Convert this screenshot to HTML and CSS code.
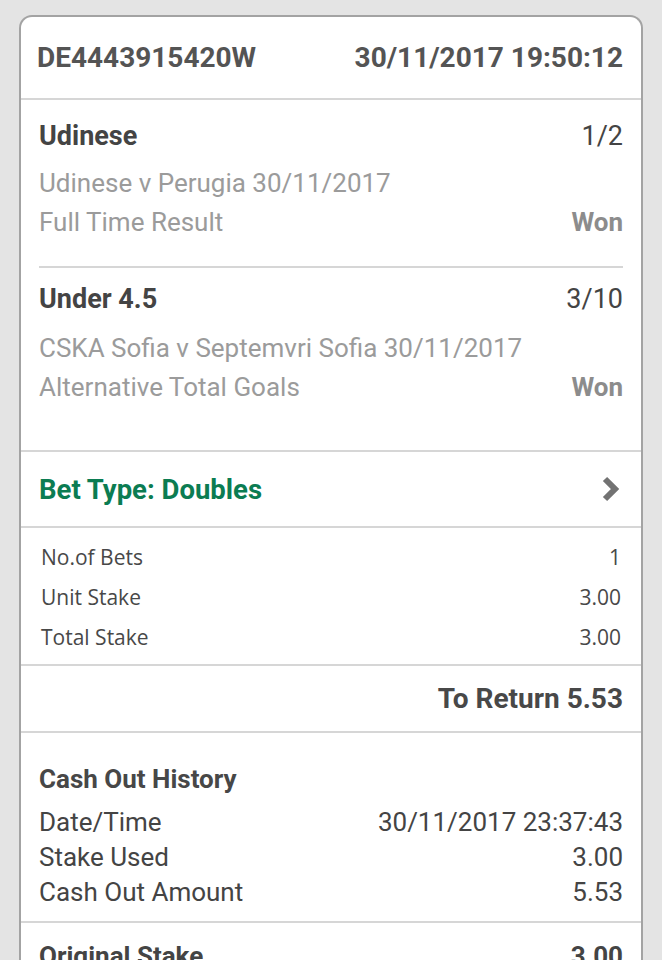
FILE: index.html
```html
<!DOCTYPE html>
<html lang="en">
<head>
    <meta charset="UTF-8">
    <meta name="viewport" content="width=device-width, initial-scale=1.0">
    <title>Bet Receipt</title>
    <link rel="stylesheet" href="styles.css">
</head>
<body>
    <div class="card">
        <header class="bet-header">
            <span>DE4443915420W</span>
            <span>30/11/2017 19:50:12</span>
        </header>

        <section class="selections">
            <div class="selection">
                <div class="sel-top">
                    <span class="sel-name">Udinese</span>
                    <span class="sel-odds">1/2</span>
                </div>
                <div class="sel-line">Udinese v Perugia 30/11/2017</div>
                <div class="sel-line">
                    <span>Full Time Result</span>
                    <span class="result">Won</span>
                </div>
            </div>
            <div class="selection">
                <div class="sel-top">
                    <span class="sel-name">Under 4.5</span>
                    <span class="sel-odds">3/10</span>
                </div>
                <div class="sel-line">CSKA Sofia v Septemvri Sofia 30/11/2017</div>
                <div class="sel-line">
                    <span>Alternative Total Goals</span>
                    <span class="result">Won</span>
                </div>
            </div>
        </section>

        <section class="bet-type">
            <span>Bet Type: Doubles</span>
            <svg class="chevron" width="20" height="26" viewBox="0 0 20 26">
                <path d="M4 3 L14 13 L4 23" fill="none" stroke="#727272" stroke-width="6"/>
            </svg>
        </section>

        <section class="stakes">
            <div class="stake-row"><span>No.of Bets</span><span>1</span></div>
            <div class="stake-row"><span>Unit Stake</span><span>3.00</span></div>
            <div class="stake-row"><span>Total Stake</span><span>3.00</span></div>
        </section>

        <section class="to-return">To Return 5.53</section>

        <section class="cashout">
            <h2>Cash Out History</h2>
            <div class="cash-row"><span>Date/Time</span><span>30/11/2017 23:37:43</span></div>
            <div class="cash-row"><span>Stake Used</span><span>3.00</span></div>
            <div class="cash-row"><span>Cash Out Amount</span><span>5.53</span></div>
        </section>

        <section class="original">
            <span>Original Stake</span>
            <span>3.00</span>
        </section>
    </div>
</body>
</html>
```

FILE: styles.css
```css
body {
    margin: 0;
    background: #e4e4e4;
    font-family: Roboto, "Noto Sans", sans-serif;
    color: #474747;
    overflow: hidden;
}
.card {
    margin: 15px 19px 0 19px;
    background: #fff;
    border: 2px solid #a3a3a3;
    border-bottom: none;
    border-radius: 13px 13px 0 0;
    height: 1000px;
}
.bet-header {
    display: flex;
    justify-content: space-between;
    align-items: center;
    height: 81px;
    padding: 0 18px 0 16px;
    font-size: 28px;
    font-weight: 700;
    color: #545454;
    border-bottom: 2px solid #d6d6d6;
}
.selections {
    padding: 6px 0 19px;
    border-bottom: 2px solid #d6d6d6;
}
.selection {
    margin: 0 18px;
    padding: 12px 0 24px;
    border-bottom: 2px solid #d6d6d6;
}
.selection:last-child {
    padding-top: 13px;
    border-bottom: none;
}
.sel-top {
    display: flex;
    justify-content: space-between;
    align-items: baseline;
    line-height: 36px;
}
.sel-name {
    font-size: 27px;
    font-weight: 700;
    color: #444;
}
.sel-odds {
    font-size: 27px;
    color: #444;
}
.sel-top + .sel-line {
    margin-top: 10px;
}
.selection:last-child .sel-top + .sel-line {
    margin-top: 12px;
}
.sel-line {
    display: flex;
    justify-content: space-between;
    align-items: baseline;
    line-height: 39px;
    font-size: 26px;
    color: #9b9b9b;
}
.result {
    font-weight: 700;
    color: #8c8c8c;
}
.bet-type {
    display: flex;
    justify-content: space-between;
    align-items: center;
    height: 74px;
    padding: 0 20px 0 18px;
    font-size: 27.5px;
    font-weight: 700;
    color: #0b7c52;
    border-bottom: 2px solid #d6d6d6;
}
.stakes {
    padding: 9px 0 7px;
    border-bottom: 2px solid #d6d6d6;
}
.stake-row {
    display: flex;
    justify-content: space-between;
    height: 40px;
    align-items: center;
    padding: 0 20px;
    font-family: "Open Sans", "Noto Sans", sans-serif;
    font-size: 21px;
    color: #484848;
}
.to-return {
    height: 65px;
    line-height: 65px;
    text-align: right;
    padding-right: 18px;
    font-size: 28px;
    font-weight: 700;
    color: #484848;
    border-bottom: 2px solid #d6d6d6;
}
.cashout {
    padding: 28px 18px 11px;
    border-bottom: 2px solid #d6d6d6;
}
.cashout h2 {
    margin: 0 0 8px;
    font-size: 26px;
    line-height: 36px;
    font-weight: 700;
    color: #474747;
}
.cash-row {
    display: flex;
    justify-content: space-between;
    line-height: 35px;
    font-size: 26px;
    color: #444;
}
.original {
    display: flex;
    justify-content: space-between;
    padding: 18px 18px;
    font-size: 26px;
    font-weight: 700;
    line-height: 30px;
    color: #444;
}
```
